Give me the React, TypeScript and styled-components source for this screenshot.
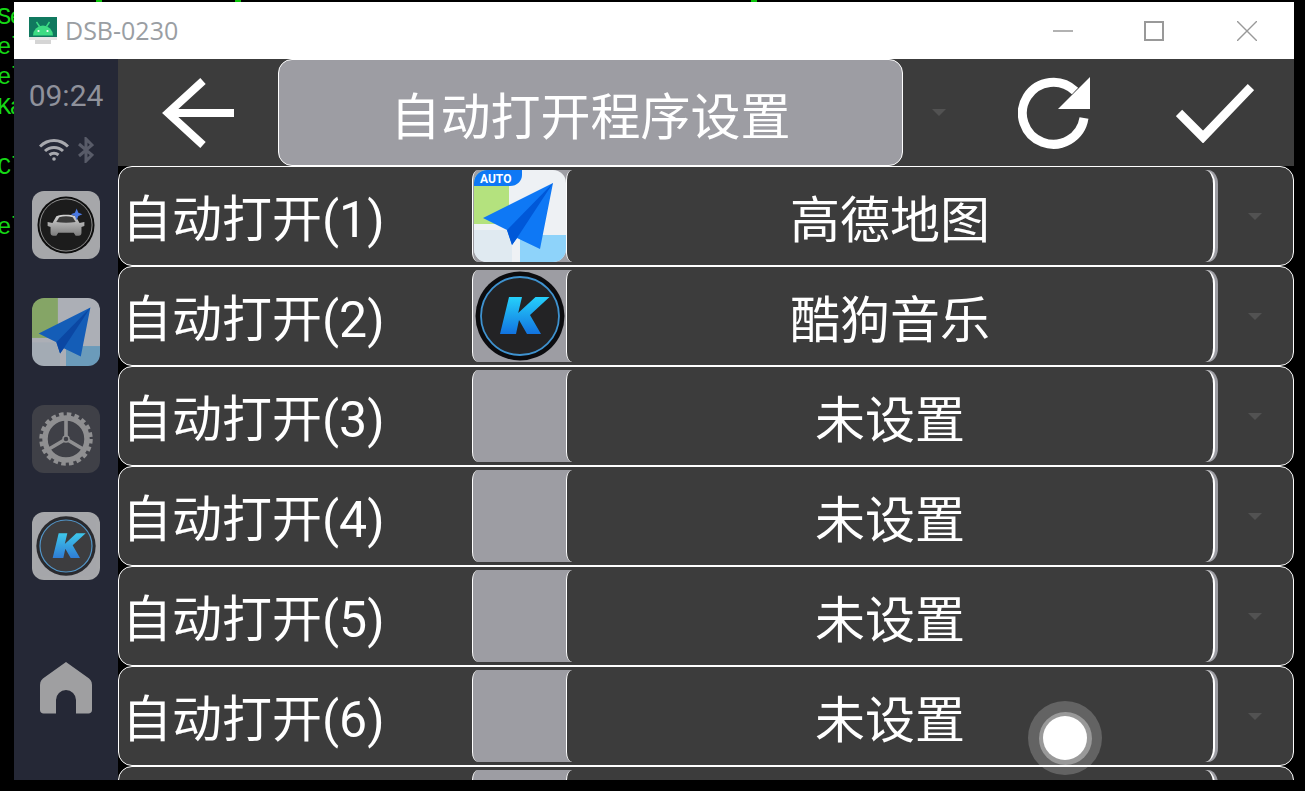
import React from "react";
import styled, { createGlobalStyle } from "styled-components";

const Global = createGlobalStyle`
  html, body { margin: 0; padding: 0; background: #000; width: 1305px; height: 791px; overflow: hidden; }
  * { box-sizing: border-box; }
`;
const Page = styled.div`
  position: relative; width: 1305px; height: 791px; display: flex; align-items: flex-start; background: #000; overflow: hidden;
`;
const Terminal = styled.div`
  width: 14px; height: 791px; overflow: hidden; flex: none;
`;
const TerminalText = styled.pre`
  margin: 0 0 0 -3px; padding-top: 3px; font: 24px/30px "Liberation Mono", monospace; letter-spacing: -2px; color: #16d816;
`;
const TopMark = styled.div<{ $x: number }>`
  position: absolute; top: 0; left: ${p => p.$x}px; width: 6px; height: 2px; background: #0cc40c;
`;
const Window = styled.div`
  width: 1280px; height: 778px; margin-top: 2px; flex: none; display: flex; flex-direction: column; overflow: hidden;
`;
const TitleBar = styled.div`
  height: 57px; flex: none; background: #fff; display: flex; align-items: center; padding-left: 15px;
`;
const TitleText = styled.span`
  margin-left: 8px; margin-top: -2px; font: 25px "Open Sans", "Noto Sans", sans-serif; color: #9a9ea3;
`;
const WindowButtons = styled.div`
  margin-left: auto; display: flex; align-items: center; padding-right: 37px; gap: 71px;
  svg:last-child { margin-left: 2px; }
`;
const Body = styled.div`
  flex: 1; min-height: 0; display: flex;
`;
const Sidebar = styled.div`
  width: 104px; flex: none; background: #252836; display: flex; flex-direction: column; align-items: center; color: #8d8f99;
`;
const Clock = styled.div`
  margin-top: 20px; height: 34px; font: 30px/34px Roboto, sans-serif; color: #8f919b;
`;
const StatusIcons = styled.div`
  margin-top: 22px; height: 30px; display: flex; align-items: center; gap: 9px; margin-left: 0;
`;
const Dock = styled.div`
  margin-top: 26px; display: flex; flex-direction: column; gap: 39px;
`;
const DockIcon = styled.div<{ $bg: string }>`
  width: 68px; height: 68px; border-radius: 12px; overflow: hidden; background: ${p => p.$bg}; display: flex; align-items: center; justify-content: center;
  svg { display: block; }
`;
const Dim = styled.div<{ $o: number }>`
  opacity: ${p => p.$o}; display: flex;
`;
const HomeSlot = styled.div`
  margin-top: 82px; display: flex;
`;
const Main = styled.div`
  flex: 1; min-width: 0; display: flex; flex-direction: column; background: #000; overflow: hidden;
`;
const Header = styled.div`
  height: 107px; flex: none; background: #3c3c3c; display: flex; align-items: center;
`;
const HeaderIcon = styled.div<{ $w: number; $ml: number }>`
  width: ${p => p.$w}px; margin-left: ${p => p.$ml}px; flex: none; display: flex; justify-content: center;
`;
const TitleButton = styled.div`
  margin-left: 44px; width: 625px; height: 107px; flex: none; border: 1px solid #fff; border-radius: 14px; background: #9d9da3;
  display: flex; align-items: center; justify-content: center; font: 50px "Noto Sans CJK SC", sans-serif; color: #fff;
`;
const Caret = styled.div`
  width: 0; height: 0; border-left: 7px solid transparent; border-right: 7px solid transparent; border-top: 7px solid #525252; flex: none;
`;
const Row = styled.div`
  height: 100px; flex: none; background: #3c3c3c; border: 1px solid #fff; border-radius: 14px; display: flex; align-items: center; padding-right: 32px;
`;
const Label = styled.div`
  width: 353px; flex: none; padding: 8px 0 0 3px; font: 50px/1 Roboto, "Noto Sans CJK SC", sans-serif; color: #fff; white-space: nowrap;
`;
const Slot = styled.div`
  width: 746px; height: 92px; flex: none; background: #9d9da3; border-left: 1px solid #fff;
  border-radius: 6px 10px 10px 6px / 10px 14px 14px 10px; display: flex; padding-right: 3px;
`;
const AppIcon = styled.div`
  width: 94px; flex: none; display: flex; align-items: center; justify-content: center; margin-right: -1px;
  svg { display: block; }
`;
const Spinner = styled.div`
  flex: 1; min-width: 0; background: #3c3c3c; border-left: 1px solid #fff; border-right: 2px solid #fff;
  border-radius: 6px 10px 10px 6px / 10px 14px 14px 10px;
  display: flex; align-items: center; justify-content: center; font: 50px/1 "Noto Sans CJK SC", sans-serif; color: #fff;
`;
const RowCaret = styled.div`
  flex: 1; display: flex; justify-content: center; padding-left: 30px;
`;
const Assist = styled.div`
  position: absolute; left: 1028px; top: 701px; width: 74px; height: 74px; border-radius: 50%; background: rgba(255,255,255,.2);
  display: flex; align-items: center; justify-content: center;
`;
const AssistMid = styled.div`
  width: 53px; height: 53px; border-radius: 50%; background: #999; display: flex; align-items: center; justify-content: center;
`;
const AssistCore = styled.div`
  width: 44px; height: 44px; border-radius: 50%; background: #fff;
`;

const AndroidLogo = () => (
  <svg width="28" height="28" viewBox="0 0 28 28">
    <rect x="0" y="0" width="28" height="20" fill="#10795f" />
    <path d="M4 18.500a10 10 0 0 1 20 0z" fill="#3ddc84" />
    <path d="M7.500 5l3 4.500M20.500 5l-3 4.500" stroke="#3ddc84" strokeWidth="1.4" />
    <circle cx="9.500" cy="14" r="1.100" fill="#fff" /><circle cx="18.500" cy="14" r="1.100" fill="#fff" />
    <rect x="0" y="20" width="28" height="3" fill="#e6e6e6" />
    <rect x="6" y="23" width="16" height="4" fill="#d5d5d5" />
  </svg>
);
const Minimize = () => <svg width="20" height="20"><path d="M0 10h20" stroke="#999" strokeWidth="1.5" /></svg>;
const Maximize = () => <svg width="20" height="20"><rect x="1" y="1" width="18" height="18" fill="none" stroke="#999" strokeWidth="2" /></svg>;
const CloseX = () => <svg width="20" height="20"><path d="M0 0l20 20M20 0L0 20" stroke="#999" strokeWidth="1.4" /></svg>;
const Wifi = () => (
  <svg width="30" height="22" viewBox="0 0 30 22" fill="none" stroke="#a8a9ae" strokeWidth="3">
    <path d="M1 7.500C9-.5 21-.5 29 7.500M6 12c5-4.800 13-4.800 18 0M10.500 16c2.600-2.200 6.400-2.200 9 0" />
    <circle cx="15" cy="20" r="1.800" fill="#a8a9ae" stroke="none" />
  </svg>
);
const Bluetooth = () => (
  <svg width="16" height="26" viewBox="0 0 16 26" fill="none" stroke="#585b68" strokeWidth="3">
    <path d="M1 7l13 11-6 6V2l6 6L1 19" />
  </svg>
);
const CarIcon = ({ s }: { s: number }) => (
  <svg width={s} height={s} viewBox="0 0 60 60">
    <defs><linearGradient id="cg" x1="0" y1="0" x2="0" y2="1"><stop offset="0" stopColor="#d4d4d4" /><stop offset="1" stopColor="#7c7c7c" /></linearGradient></defs>
    <circle cx="30" cy="30" r="29.500" fill="#0e0e0e" />
    <circle cx="30" cy="30" r="27" fill="#1c1c1c" stroke="#a5a5a5" strokeWidth="0.900" />
    <path d="M17 41c-2 0-3-1-3-3v-6l-3-1v-4l5 1 4-7c6-2 14-2 20 0l4 7 5-1v4l-3 1v6c0 2-1 3-3 3h-3l-2-3H22l-2 3z" fill="url(#cg)" />
    <path d="M20 27l3-5c5-1.500 9-1.500 14 0l3 5c-6 1-14 1-20 0z" fill="#3b3b3b" />
    <path d="M41 13l1.800 4.200 4.200 1.800-4.200 1.800L41 25l-1.800-4.200L35 19l4.200-1.800z" fill="#4a78e0" />
  </svg>
);
const AmapIcon = ({ s, auto }: { s: number; auto?: boolean }) => (
  <svg width={s} height={s} viewBox="0 0 92 92">
    <defs><clipPath id={auto ? "ca" : "cb"}><rect width="92" height="92" rx="13" /></clipPath></defs>
    <g clipPath={`url(#${auto ? "ca" : "cb"})`}>
      <rect width="92" height="92" fill="#eef1f4" />
      <rect x="0" y="0" width="35" height="54" fill="#b4e27e" />
      <rect x="0" y="60" width="38" height="32" fill="#e0eaf1" />
      <rect x="46" y="65" width="46" height="27" fill="#8ed3fa" />
      <path d="M79 13 9 48l24 12 5 15 5-7 23 11z" fill="#0e78f5" />
      <path d="M79 13 33 60l5 15 5-7z" fill="#0058d8" />
      {auto && <><path d="M0 0h48v5c0 6-5 11-12 11H0z" fill="#0e78f5" /><text x="6" y="13" fontFamily="Roboto, sans-serif" fontWeight="700" fontSize="12" fill="#fff">AUTO</text></>}
    </g>
  </svg>
);
const KugouIcon = ({ s, id }: { s: number; id: string }) => (
  <svg width={s} height={s} viewBox="0 0 90 90">
    <defs><linearGradient id={id} x1="0" y1="0" x2="0" y2="1"><stop offset="0" stopColor="#25d0fb" /><stop offset="1" stopColor="#1273e0" /></linearGradient></defs>
    <circle cx="45" cy="45" r="44.500" fill="#0c0c0f" />
    <circle cx="45" cy="45" r="39" fill="#232325" stroke="#3f92cf" strokeWidth="1.800" />
    <path d="M34 26h13l-3.800 16 17.300-16h14L55 44l11 19H52l-8-14-3 14H25z" fill={`url(#${id})`} />
  </svg>
);
const GearIcon = () => (
  <svg width="54" height="54" viewBox="0 0 54 54">
    <g stroke="#8f8f91" fill="none">
      <circle cx="27" cy="27" r="21" strokeWidth="5.500" />
      <circle cx="27" cy="27" r="24.500" strokeWidth="4.500" strokeDasharray="4.500 3.200" />
      <path d="M27 27V8M27 27L10 37M27 27l17 10" strokeWidth="3.600" />
    </g>
    <circle cx="27" cy="27" r="3" fill="#3f4047" stroke="#8f8f91" strokeWidth="1.500" />
  </svg>
);
const HomeIcon = () => (
  <svg width="52" height="52" viewBox="0 0 52 52">
    <path d="M26 0 47 15c3 2 5 4 5 8v25c0 2-1.500 3.500-3.500 3.500H36V38a10 10 0 0 0-20 0v13.500H3.500C1.500 51.500 0 50 0 48V23c0-4 2-6 5-8z" fill="#9f9fa1" />
  </svg>
);
const BackArrow = () => (
  <svg width="72" height="70" viewBox="0 0 72 70" fill="none" stroke="#fff" strokeWidth="8">
    <path d="M41 3 6 35l35 32M6 35h66" />
  </svg>
);
const RefreshIcon = () => (
  <svg width="72" height="72" viewBox="0 0 72 72" fill="none">
    <path d="M66 41A31 31 0 1 1 57 14" stroke="#fff" strokeWidth="9" />
    <path d="M72 0v32H40z" fill="#fff" />
  </svg>
);
const CheckIcon = () => (
  <svg width="78" height="60" viewBox="0 0 78 60" fill="none" stroke="#fff" strokeWidth="9">
    <path d="M3 30l24 24L75 4" />
  </svg>
);

const rows: { id: number; label: string; name: string; icon?: React.ReactNode }[] = [
  { id: 1, label: "自动打开(1)", name: "高德地图", icon: <AmapIcon s={92} auto /> },
  { id: 2, label: "自动打开(2)", name: "酷狗音乐", icon: <KugouIcon s={90} id="k1" /> },
  { id: 3, label: "自动打开(3)", name: "未设置" },
  { id: 4, label: "自动打开(4)", name: "未设置" },
  { id: 5, label: "自动打开(5)", name: "未设置" },
  { id: 6, label: "自动打开(6)", name: "未设置" },
  { id: 7, label: "", name: "" },
];

export default function App() {
  return (
    <Page>
      <Global />
      <TopMark $x={96} /><TopMark $x={235} /><TopMark $x={751} />
      <Terminal><TerminalText>{"Se\nel\nel\nKa\n\nCl\n\nel"}</TerminalText></Terminal>
      <Window>
        <TitleBar>
          <AndroidLogo />
          <TitleText>DSB-0230</TitleText>
          <WindowButtons>
            <Minimize /><Maximize /><CloseX />
          </WindowButtons>
        </TitleBar>
        <Body>
          <Sidebar>
            <Clock>09:24</Clock>
            <StatusIcons><Wifi /><Bluetooth /></StatusIcons>
            <Dock>
              <DockIcon $bg="#a6a7aa"><CarIcon s={58} /></DockIcon>
              <DockIcon $bg="transparent"><Dim $o={0.68}><AmapIcon s={68} /></Dim></DockIcon>
              <DockIcon $bg="#3f4047"><GearIcon /></DockIcon>
              <DockIcon $bg="#a6a7aa"><Dim $o={0.8}><KugouIcon s={60} id="k2" /></Dim></DockIcon>
            </Dock>
            <HomeSlot><HomeIcon /></HomeSlot>
          </Sidebar>
          <Main>
            <Header>
              <HeaderIcon $w={72} $ml={44}><BackArrow /></HeaderIcon>
              <TitleButton>自动打开程序设置</TitleButton>
              <HeaderIcon $w={14} $ml={29}><Caret /></HeaderIcon>
              <HeaderIcon $w={72} $ml={72}><RefreshIcon /></HeaderIcon>
              <HeaderIcon $w={78} $ml={86}><CheckIcon /></HeaderIcon>
            </Header>
            {rows.map(r => (
              <Row key={r.id}>
                <Label>{r.label}</Label>
                <Slot>
                  <AppIcon>{r.icon}</AppIcon>
                  <Spinner>{r.name}</Spinner>
                </Slot>
                <RowCaret><Caret /></RowCaret>
              </Row>
            ))}
          </Main>
        </Body>
      </Window>
      <Assist><AssistMid><AssistCore /></AssistMid></Assist>
    </Page>
  );
}
